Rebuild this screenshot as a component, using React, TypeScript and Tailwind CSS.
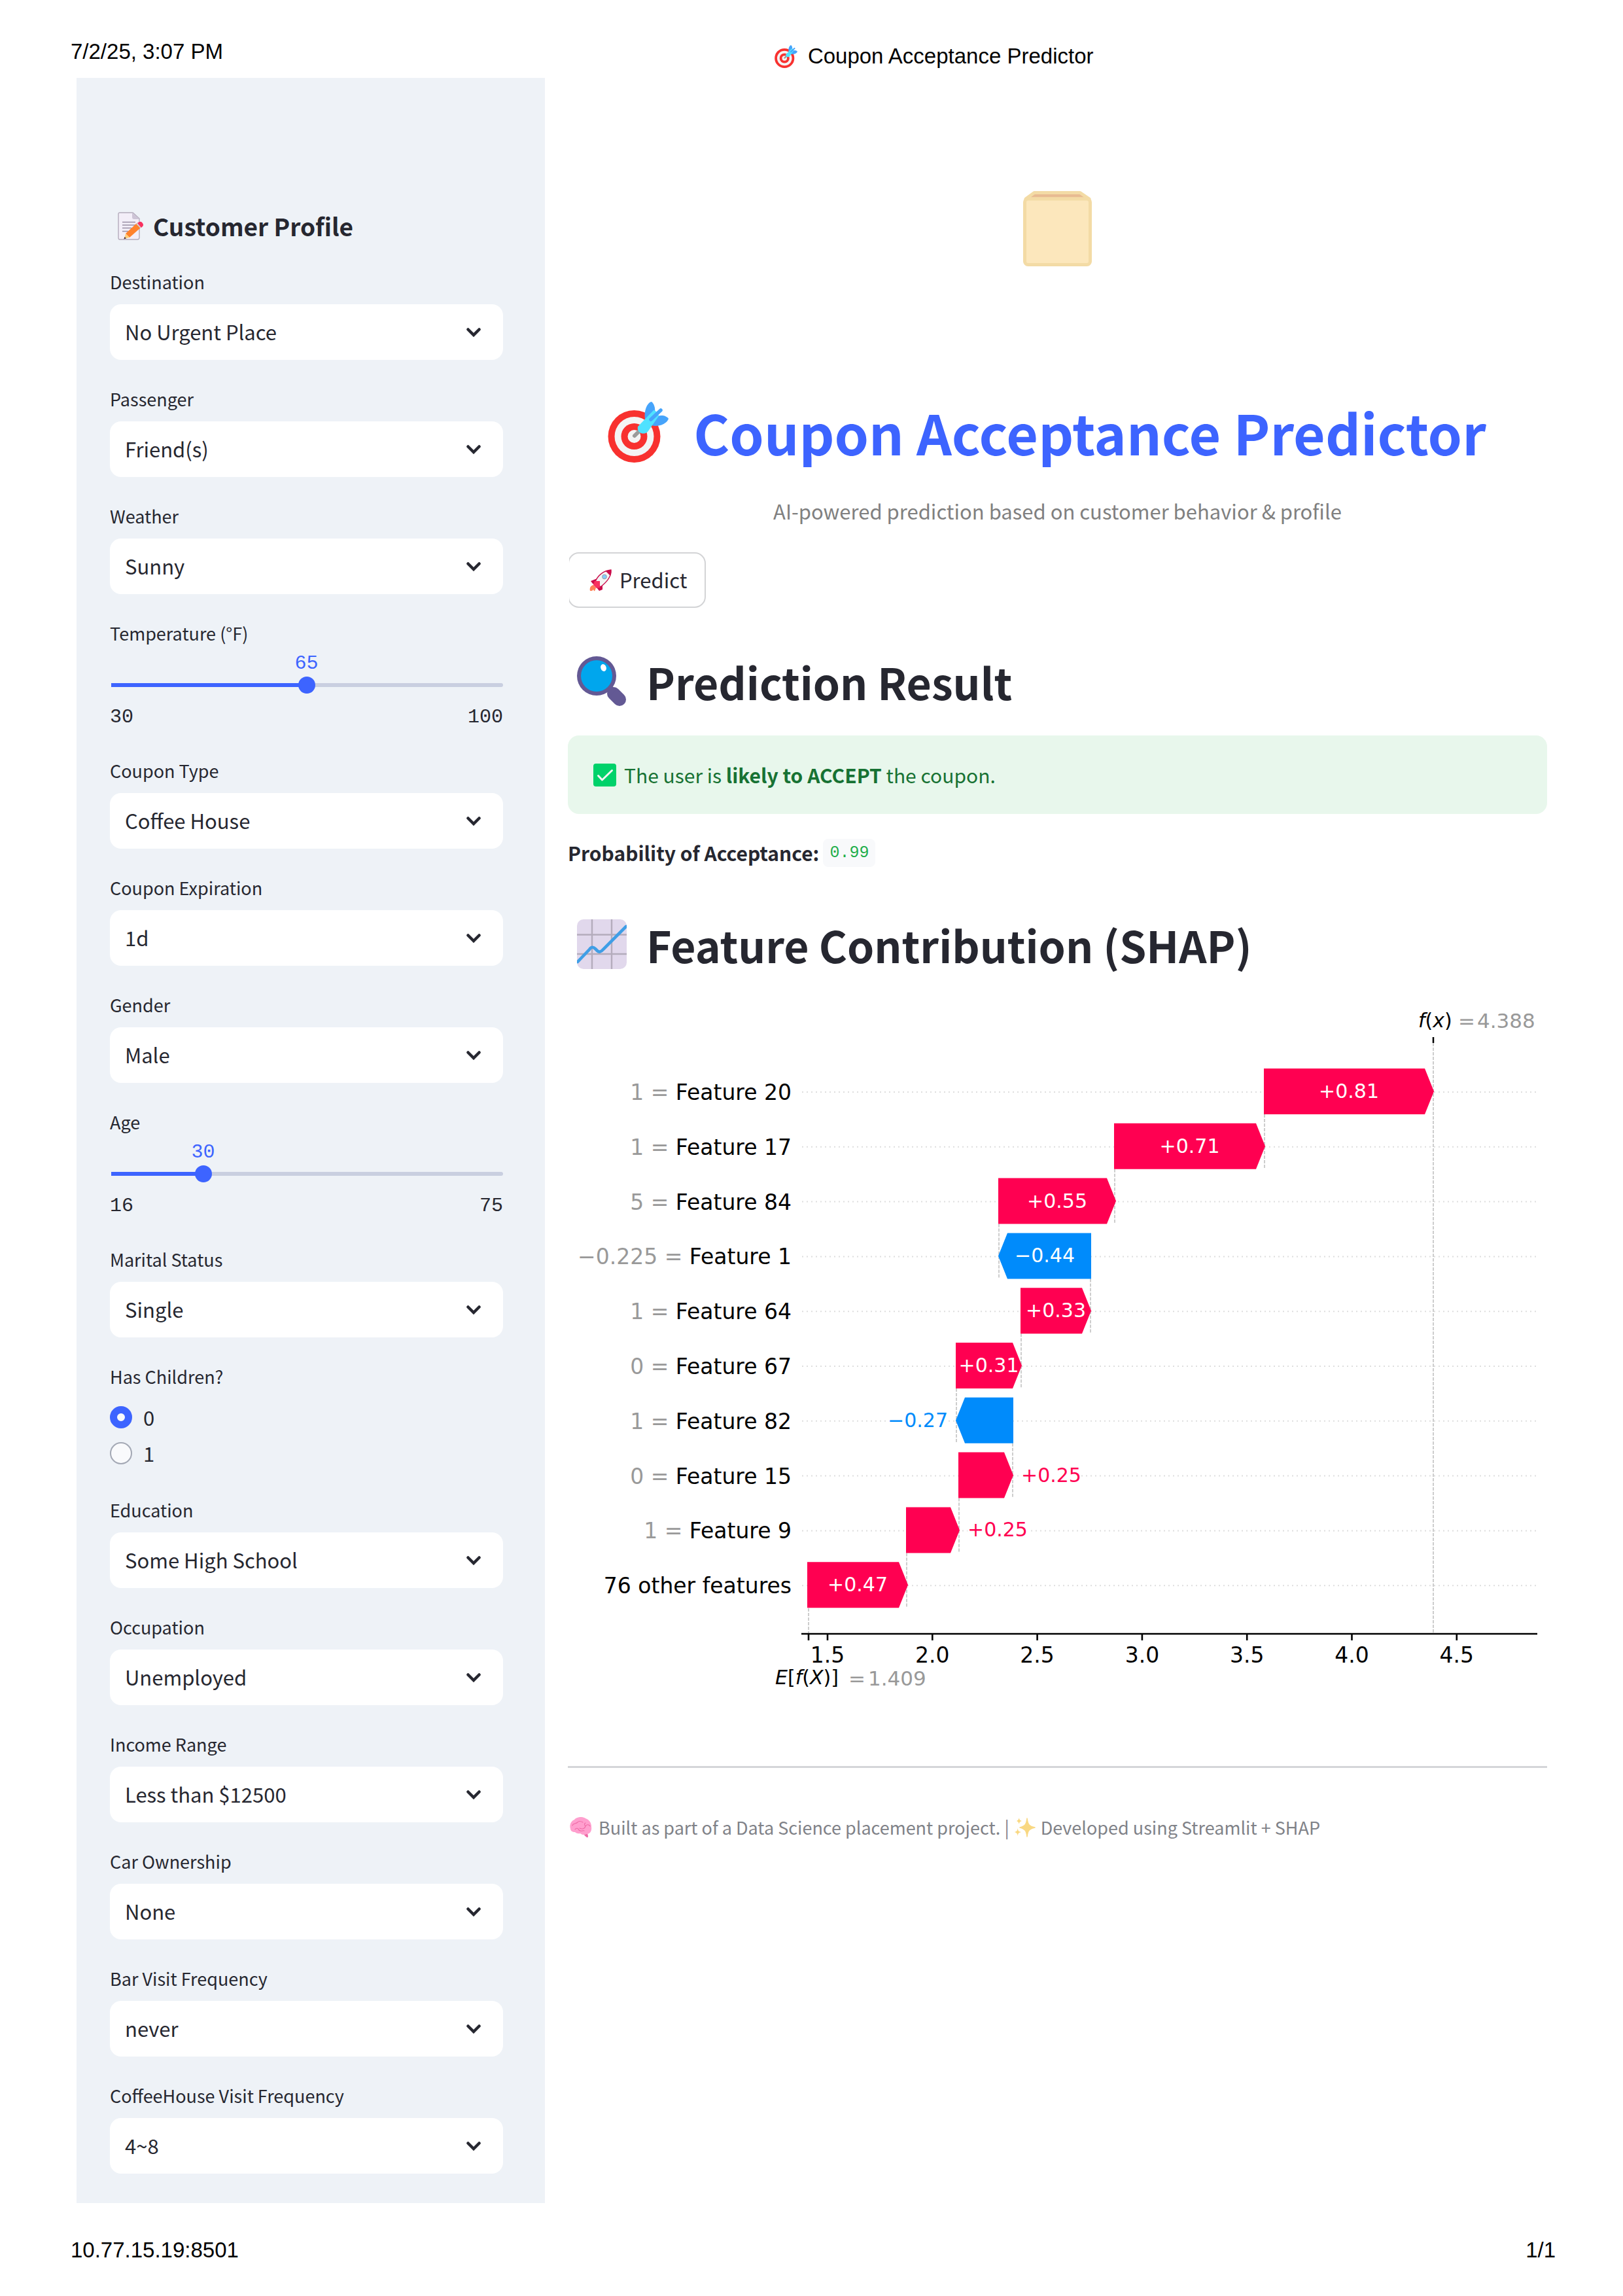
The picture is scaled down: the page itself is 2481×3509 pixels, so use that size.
import { useId, useState, type ReactNode } from "react";

const sans = "font-['Noto_Sans_CJK_SC','Noto_Sans',sans-serif]";
const arial = "font-['Liberation_Sans',Arial,sans-serif]";
const mono = "font-['Liberation_Mono',monospace]";

/* ---------- icons ---------- */

function TargetIcon({ className }: { className: string }) {
  return (
    <svg viewBox="0 0 93 93" className={className} aria-hidden="true">
      <circle cx="40.5" cy="53" r="40" fill="#f8312f" />
      <circle cx="40.5" cy="53" r="30" fill="#f4f4f4" />
      <circle cx="40.5" cy="53" r="20" fill="#f8312f" />
      <circle cx="40.5" cy="53" r="10" fill="#f4f4f4" />
      <path d="M41 52 L50 43" stroke="#9b9b9b" strokeWidth="6" strokeLinecap="round" />
      <path d="M57 27 C55 12 61 1 67 0 C71 3 73 10 72 16 L60 30 Z" fill="#46a4fb" />
      <path d="M67 36 C78 39 90 34 93 26 C90 21 82 20 76 22 L63 33 Z" fill="#46a4fb" />
      <path d="M46 38 L70 13 C73 13 78 18 78 22 L61 46 C54 52 44 47 46 38 Z" fill="#50e2ff" />
      <path d="M66 27 L81 13" stroke="#46a4fb" strokeWidth="5.5" strokeLinecap="round" />
    </svg>
  );
}

function MemoIcon({ className }: { className: string }) {
  return (
    <svg viewBox="0 0 40 43" className={className} aria-hidden="true">
      <path d="M3 1 H23 L33 10 V39 Q33 42 30 42 H3 Q1 42 1 39 V3 Q1 1 3 1 Z" fill="#f3eef8" stroke="#b4acbc" strokeWidth="1.4" />
      <path d="M22 1 L33 11 H25 Q22 11 22 8 Z" fill="#cdc4d6" />
      <path d="M7 15.500 H27 M7 20 H27 M7 24.500 H21 M7 29.500 H16" stroke="#998ea4" strokeWidth="1.4" />
      <path d="M29 17 L35 24 L18 39 L12 33 Z" fill="#ff822d" />
      <path d="M12 33 L18 39 L10 41 Z" fill="#ffce7c" />
      <path d="M10.500 38 L13 40.300 L9.300 41.500 Z" fill="#402a32" />
      <path d="M28 18 L31 15.500 L37 22 L34.500 24.700 Z" fill="#d3d3d3" />
      <path d="M30 17 L33 15 Q36 14 38 17 Q40 20 38 22 L36 24 Z" fill="#f8315f" />
    </svg>
  );
}

function RocketIcon({ className }: { className: string }) {
  return (
    <svg viewBox="0 0 34 34" className={className} aria-hidden="true">
      <path d="M1 33 C0 28 2 25 6 24 L10 28 C9 32 8 34 7 33 L6 31 L4 33 Z" fill="#ff8257" />
      <path d="M2 18 L12 14 L9 24 L5 22 Z" fill="#ca0b4a" />
      <path d="M20 22 L20 31 L15 33 L11 28 Z" fill="#ca0b4a" />
      <path d="M9 19 C13 9 22 2 33 1 C34 11 26 20 17 27 Z" fill="#f4f4f4" stroke="#ca0b4a" strokeWidth="1.3" />
      <path d="M25 3 Q29 1 33 1 Q34 5 32 10 Z" fill="#ca0b4a" />
      <path d="M8 18 L16 18 L16 28 L11 29 L6 24 Z" fill="#f8315f" />
      <circle cx="23" cy="11.500" r="3.400" fill="#83cbff" stroke="#9b9b9b" strokeWidth="1" />
    </svg>
  );
}

function MagnifierIcon({ className }: { className: string }) {
  return (
    <svg viewBox="0 0 76 78" className={className} aria-hidden="true">
      <path d="M56 58 L65 67" stroke="#635994" strokeWidth="20" strokeLinecap="round" />
      <path d="M46 46 L56 56" stroke="#635994" strokeWidth="10" />
      <circle cx="30" cy="31" r="30" fill="#635994" />
      <circle cx="30" cy="31" r="24" fill="#00a6ed" />
      <ellipse cx="40.500" cy="18.500" rx="4.200" ry="5.500" fill="#fff" transform="rotate(-20 40.500 18.500)" />
    </svg>
  );
}

function CheckIcon({ className }: { className: string }) {
  return (
    <svg viewBox="0 0 35 35" className={className} aria-hidden="true">
      <rect width="35" height="35" rx="4" fill="#00d26a" />
      <path d="M7.500 18.500 L13.500 25 L28.500 10.500" fill="none" stroke="#f4f4f4" strokeWidth="3" strokeLinecap="round" strokeLinejoin="round" />
    </svg>
  );
}

function TrendIcon({ className }: { className: string }) {
  return (
    <svg viewBox="0 0 76 76" className={className} aria-hidden="true">
      <rect width="76" height="76" rx="10" fill="#e1d8ec" />
      <path d="M23 0 V76 M53 0 V76 M0 23.500 H76 M0 53 H76" stroke="#b4acbc" strokeWidth="2.400" />
      <path d="M1 65 L19 46 Q23 40 28 45 L31 48 Q35 52 40 46 L75 11" fill="none" stroke="#3f9ee6" strokeWidth="4.600" strokeLinecap="round" />
    </svg>
  );
}

function BrainIcon({ className }: { className: string }) {
  return (
    <svg viewBox="0 0 34 32" className={className} aria-hidden="true">
      <path d="M20 22 L26 21 L28 29 Q28 32 26 31 Q23 29 21 26 Z" fill="#ef6aa6" />
      <path d="M1 18 C-1 12 2 6 7 4 C11 -1 20 -1 24 2 C30 4 33 9 33 15 C34 21 31 26 26 26 C22 28 18 27 16 25 C12 26 9 24 8 23 C4 23 1 21 1 18 Z" fill="#ff9fce" />
      <path d="M4 13 C5 9 9 11 12 8 C14 5 18 7 20 8 M15 17 C19 19 23 18 24 14 C26 10 30 12 31 14 M8 19 C10 16 13 17 14 20 C17 23 20 20 22 21 M24 14 C22 12 22 10 24 9" fill="none" stroke="#ef6aa6" strokeWidth="1.100" strokeLinecap="round" />
    </svg>
  );
}

function SparklesIcon({ className }: { className: string }) {
  return (
    <svg viewBox="0 0 32 30" className={className} aria-hidden="true">
      <path d="M19 1 C20 10 22 13 31 15 C22 17 20 20 19 29 C18 20 16 17 8 15 C16 13 18 10 19 1 Z" fill="#f9d882" stroke="#f9d882" strokeWidth="1.500" strokeLinejoin="round" />
      <path d="M7 0 C7 3 8 4 11 5 C8 6 7 7 7 10 C6 7 5 6 3 5 C5 4 6 3 7 0 Z" fill="#f9d882" />
      <path d="M5 16 C5 20 6 21 10 22 C6 23 5 24 5 28 C4 24 3 23 0 22 C3 21 4 20 5 16 Z" fill="#f9d882" />
    </svg>
  );
}

function BagIcon({ className }: { className: string }) {
  return (
    <svg viewBox="0 0 105 115" className={className} role="img" aria-label="Coupon box">
      <path d="M17 2.500 H87 L101 12 H4 Z" fill="#e8bb92" stroke="#f3dba5" strokeWidth="5" strokeLinejoin="round" />
      <rect x="2.500" y="12" width="100" height="100.500" rx="5" fill="#fce7bc" stroke="#f3dba5" strokeWidth="5" />
    </svg>
  );
}

/* ---------- sidebar controls ---------- */

const labelClass = "block text-[27px] leading-9 text-[#262730]";

function SelectField({ label, value }: { label: string; value: string }) {
  const id = useId();
  return (
    <div>
      <label htmlFor={id} className={labelClass}>
        {label}
      </label>
      <div className="relative mt-4">
        <select
          id={id}
          defaultValue={value}
          className="block h-[85px] w-full appearance-none rounded-[17px] bg-white pr-20 pl-[23px] text-[31px] text-[#262730]"
        >
          <option>{value}</option>
        </select>
        <svg viewBox="0 0 22 14" className="pointer-events-none absolute top-9 right-[34px] w-[22px]" aria-hidden="true">
          <path d="M2.500 2.500 L11 11 L19.500 2.500" fill="none" stroke="#262730" strokeWidth="4.500" strokeLinecap="round" />
        </svg>
      </div>
    </div>
  );
}

function SliderField({ label, min, max, initial }: { label: string; min: number; max: number; initial: number }) {
  const id = useId();
  const [value, setValue] = useState(initial);
  const percent = ((value - min) / (max - min)) * 100;
  return (
    <div className="pb-[5px]">
      <label htmlFor={id} className={labelClass}>
        {label}
      </label>
      <div className={`relative mt-3 h-8 text-[30px] leading-8 text-[#3d64ff] ${mono}`}>
        <output htmlFor={id} className="absolute -translate-x-1/2" style={{ left: `${percent}%` }}>
          {value}
        </output>
      </div>
      <div className="relative mt-[3px] h-7">
        <div className="absolute inset-x-0 top-[11px] ml-0.5 h-1.5 rounded-r-full bg-[#c9cfe0]">
          <div className="h-full bg-[#3d64ff]" style={{ width: `${percent}%` }} />
        </div>
        <input
          id={id}
          type="range"
          min={min}
          max={max}
          value={value}
          onChange={(e) => setValue(Number(e.target.value))}
          className="absolute -left-[13px] h-7 w-[calc(100%+26px)] appearance-none bg-transparent [&::-webkit-slider-thumb]:size-[26px] [&::-webkit-slider-thumb]:appearance-none [&::-webkit-slider-thumb]:rounded-full [&::-webkit-slider-thumb]:bg-[#3d64ff]"
        />
      </div>
      <div className={`mt-[18px] flex justify-between text-[30px] leading-[34px] text-[#262730] ${mono}`}>
        <span>{min}</span>
        <span>{max}</span>
      </div>
    </div>
  );
}

function RadioField() {
  return (
    <fieldset>
      <legend className={labelClass}>Has Children?</legend>
      <div className="mt-4">
        {["0", "1"].map((option) => (
          <label key={option} className="flex h-[55px] items-center gap-[17px] text-[31px] leading-[55px] text-[#262730]">
            <input
              type="radio"
              name="children"
              defaultChecked={option === "0"}
              className="size-[34px] appearance-none rounded-full border-2 border-[#a3a8b4] bg-[#f9fafc] checked:border-[11px] checked:border-[#3d64ff]"
            />
            {option}
          </label>
        ))}
      </div>
    </fieldset>
  );
}

function Sidebar() {
  return (
    <aside className="flex flex-col gap-[42px] bg-[#eef2f7] pt-[202px] pr-16 pb-[45px] pl-[51px]">
      <h2 className="mb-0.5 flex items-center gap-3.5 pl-3 text-[37px] leading-[48px] font-bold text-[#262730]">
        <MemoIcon className="w-10" />
        Customer Profile
      </h2>
      <SelectField label="Destination" value="No Urgent Place" />
      <SelectField label="Passenger" value="Friend(s)" />
      <SelectField label="Weather" value="Sunny" />
      <SliderField label="Temperature (°F)" min={30} max={100} initial={65} />
      <SelectField label="Coupon Type" value="Coffee House" />
      <SelectField label="Coupon Expiration" value="1d" />
      <SelectField label="Gender" value="Male" />
      <SliderField label="Age" min={16} max={75} initial={30} />
      <SelectField label="Marital Status" value="Single" />
      <RadioField />
      <SelectField label="Education" value="Some High School" />
      <SelectField label="Occupation" value="Unemployed" />
      <SelectField label="Income Range" value="Less than $12500" />
      <SelectField label="Car Ownership" value="None" />
      <SelectField label="Bar Visit Frequency" value="never" />
      <SelectField label="CoffeeHouse Visit Frequency" value="4~8" />
    </aside>
  );
}

/* ---------- waterfall chart ---------- */

type Row = { value?: string; name: string; from: number; to: number; text: string; outside?: boolean };

const rows: Row[] = [
  { value: "1", name: "Feature 20", from: 1064, to: 1324, text: "+0.81" },
  { value: "1", name: "Feature 17", from: 835, to: 1066, text: "+0.71" },
  { value: "5", name: "Feature 84", from: 658, to: 838, text: "+0.55" },
  { value: "−0.225", name: "Feature 1", from: 800, to: 658, text: "−0.44" },
  { value: "1", name: "Feature 64", from: 692, to: 800, text: "+0.33" },
  { value: "0", name: "Feature 67", from: 593, to: 694, text: "+0.31" },
  { value: "1", name: "Feature 82", from: 681, to: 593, text: "−0.27", outside: true },
  { value: "0", name: "Feature 15", from: 597, to: 681, text: "+0.25", outside: true },
  { value: "1", name: "Feature 9", from: 517, to: 599, text: "+0.25", outside: true },
  { name: "76 other features", from: 366, to: 520, text: "+0.47" },
];

const ticks = ["1.5", "2.0", "2.5", "3.0", "3.5", "4.0", "4.5"];
const rowY = (i: number) => 167 + i * 83.8;

function ShapChart() {
  return (
    <svg
      viewBox="0 0 1497 1120"
      className="mt-[13px] block w-full font-['DejaVu_Sans',sans-serif]"
      role="img"
      aria-label="SHAP waterfall chart"
    >
      {rows.map((r, i) => (
        <line key={r.name} x1="358" x2="1480" y1={rowY(i) + 1} y2={rowY(i) + 1} stroke="#dedede" strokeWidth="2" strokeDasharray="2 5" />
      ))}
      {rows.slice(1).map((r, i) => {
        // each connector drops from where the row above starts
        const above = rows[i];
        const x = above.to > above.from ? above.from + 1 : above.from - 1;
        return (
          <line key={r.name} x1={x} x2={x} y1={rowY(i)} y2={rowY(i + 1) + 35} stroke="#bdbdbd" strokeWidth="1.500" strokeDasharray="5 2" />
        );
      })}
      <line x1="1323" x2="1323" y1="93" y2="996" stroke="#bdbdbd" strokeWidth="1.500" strokeDasharray="5 2" />
      <line x1="1323" x2="1323" y1="84" y2="93" stroke="#000" strokeWidth="2.500" />
      <line x1="368" x2="368" y1="950" y2="996" stroke="#bdbdbd" strokeWidth="1.500" strokeDasharray="5 2" />
      {rows.map((r, i) => {
        const y = rowY(i);
        const positive = r.to > r.from;
        const color = positive ? "#ff0051" : "#008bfb";
        const neck = positive ? r.to - 14 : r.to + 14;
        const mid = (r.from + r.to) / 2;
        const outsideX = positive ? r.to + 12 : r.to - 12;
        return (
          <g key={r.name}>
            <path d={`M${r.from} ${y - 35} H${neck} L${r.to} ${y} L${neck} ${y + 35} H${r.from} Z`} fill={color} />
            {r.outside && (
              <rect x={positive ? outsideX : outsideX - 91} y={y - 18} width="92" height="36" fill="#fff" />
            )}
            <text
              x={r.outside ? outsideX : mid}
              y={y + 10}
              fontSize="30"
              fill={r.outside ? color : "#fff"}
              textAnchor={r.outside ? (positive ? "start" : "end") : "middle"}
            >
              {r.text}
            </text>
            <text x="342" y={y + 13} fontSize="33" textAnchor="end">
              {r.value && <tspan fill="#999">{r.value} = </tspan>}
              <tspan fill="#000">{r.name}</tspan>
            </text>
          </g>
        );
      })}
      <line x1="357" x2="1482" y1="996" y2="996" stroke="#000" strokeWidth="2.600" />
      <line x1="368" x2="368" y1="996" y2="1006" stroke="#000" strokeWidth="2.600" />
      {ticks.map((t, i) => {
        const x = 397 + i * 160.3;
        return (
          <g key={t}>
            <line x1={x} x2={x} y1="996" y2="1006" stroke="#000" strokeWidth="2.600" />
            <text x={x} y="1040" fontSize="33" textAnchor="middle">
              {t}
            </text>
          </g>
        );
      })}
      <text x="1300" y="69" fontSize="30">
        <tspan fontStyle="italic">f</tspan>(<tspan fontStyle="italic">x</tspan>)
      </text>
      <text x="1361" y="70" fontSize="31" fill="#999">
        =
      </text>
      <text x="1390" y="70" fontSize="31" fill="#999">
        4.388
      </text>
      <text x="317" y="1073" fontSize="30">
        <tspan fontStyle="italic">E</tspan>[<tspan fontStyle="italic">f</tspan>(<tspan fontStyle="italic">X</tspan>)]
      </text>
      <text x="429" y="1075" fontSize="31" fill="#999">
        =
      </text>
      <text x="459" y="1075" fontSize="31" fill="#999">
        1.409
      </text>
    </svg>
  );
}

/* ---------- main column ---------- */

function SectionHeading({ icon, children }: { icon: ReactNode; children: ReactNode }) {
  return (
    <h2 className="flex items-center gap-[30px] pl-3.5 text-[66px] leading-[90px] font-bold text-[#262730]">
      {icon}
      {children}
    </h2>
  );
}

function MainColumn() {
  return (
    <main className="min-w-0 pt-[173px] pr-[116px] pl-[35px]">
      <BagIcon className="mx-auto w-[105px]" />
      <h1 className="mt-[203px] flex items-center justify-center gap-[38px] pr-8 text-[84px] leading-[100px] font-bold whitespace-nowrap text-[#3d64ff]">
        <TargetIcon className="w-[93px]" />
        Coupon Acceptance Predictor
      </h1>
      <p className="mt-[46px] text-center text-[31px] leading-[50px] text-[#808080]">
        AI-powered prediction based on customer behavior &amp; profile
      </p>
      <div className="mt-[38px] ml-0.5 overflow-hidden">
        <button
          type="button"
          className="-ml-0.5 flex h-[85px] items-center gap-3 rounded-[17px] border-2 border-[#d3d4d6] bg-white pr-[27px] pl-[31px] text-[31px] text-[#262730]"
        >
          <RocketIcon className="w-[34px]" />
          Predict
        </button>
      </div>

      <section className="mt-[67px]">
        <SectionHeading icon={<MagnifierIcon className="w-[76px]" />}>Prediction Result</SectionHeading>
        <div role="status" className="mt-[38px] flex h-[120px] items-center gap-3 rounded-[17px] bg-[#e8f7ec] px-[39px] text-[30px] leading-[50px] text-[#177233]">
          <CheckIcon className="w-[35px]" />
          <p>
            The user is <strong className="font-bold">likely to ACCEPT</strong> the coupon.
          </p>
        </div>
        <p className="mt-[34px] flex items-center gap-1.5 text-[30px] leading-[50px] text-[#262730]">
          <strong className="font-bold">Probability of Acceptance:</strong>
          <code className={`rounded-lg bg-[#f8f9fb] px-2.5 text-[25px] leading-[43px] text-[#1fae4b] ${mono}`}>0.99</code>
        </p>
      </section>

      <section className="mt-[70px]">
        <SectionHeading icon={<TrendIcon className="w-[76px]" />}>Feature Contribution (SHAP)</SectionHeading>
        <ShapChart />
      </section>

      <hr className="mt-[78px] border-t-[3px] border-[#d4d5d9]" />
      <p className="mt-[67px] flex items-center pl-[3px] text-[27px] leading-[48px] text-[#808288]">
        <BrainIcon className="mr-2.5 w-[34px]" />
        Built as part of a Data Science placement project. |
        <SparklesIcon className="mr-2 ml-2 w-8" />
        Developed using Streamlit + SHAP
      </p>
    </main>
  );
}

export default function App() {
  return (
    <div className={`min-h-screen bg-white ${sans}`}>
      <header className={`flex h-[119px] items-start px-[108px] text-[33px] leading-10 text-black ${arial}`}>
        <time className="w-[47.5%] pt-[59px]">7/2/25, 3:07 PM</time>
        <span className="flex items-center gap-4 pt-[66px]">
          <TargetIcon className="w-[35px]" />
          Coupon Acceptance Predictor
        </span>
      </header>
      <div className="grid grid-cols-[716px_minmax(0,1fr)] pl-[117px]">
        <Sidebar />
        <MainColumn />
      </div>
      <footer className={`flex h-[143px] justify-between pt-[52px] pr-[103px] pl-[108px] text-[33px] leading-10 text-black ${arial}`}>
        <span>10.77.15.19:8501</span>
        <span>1/1</span>
      </footer>
    </div>
  );
}
